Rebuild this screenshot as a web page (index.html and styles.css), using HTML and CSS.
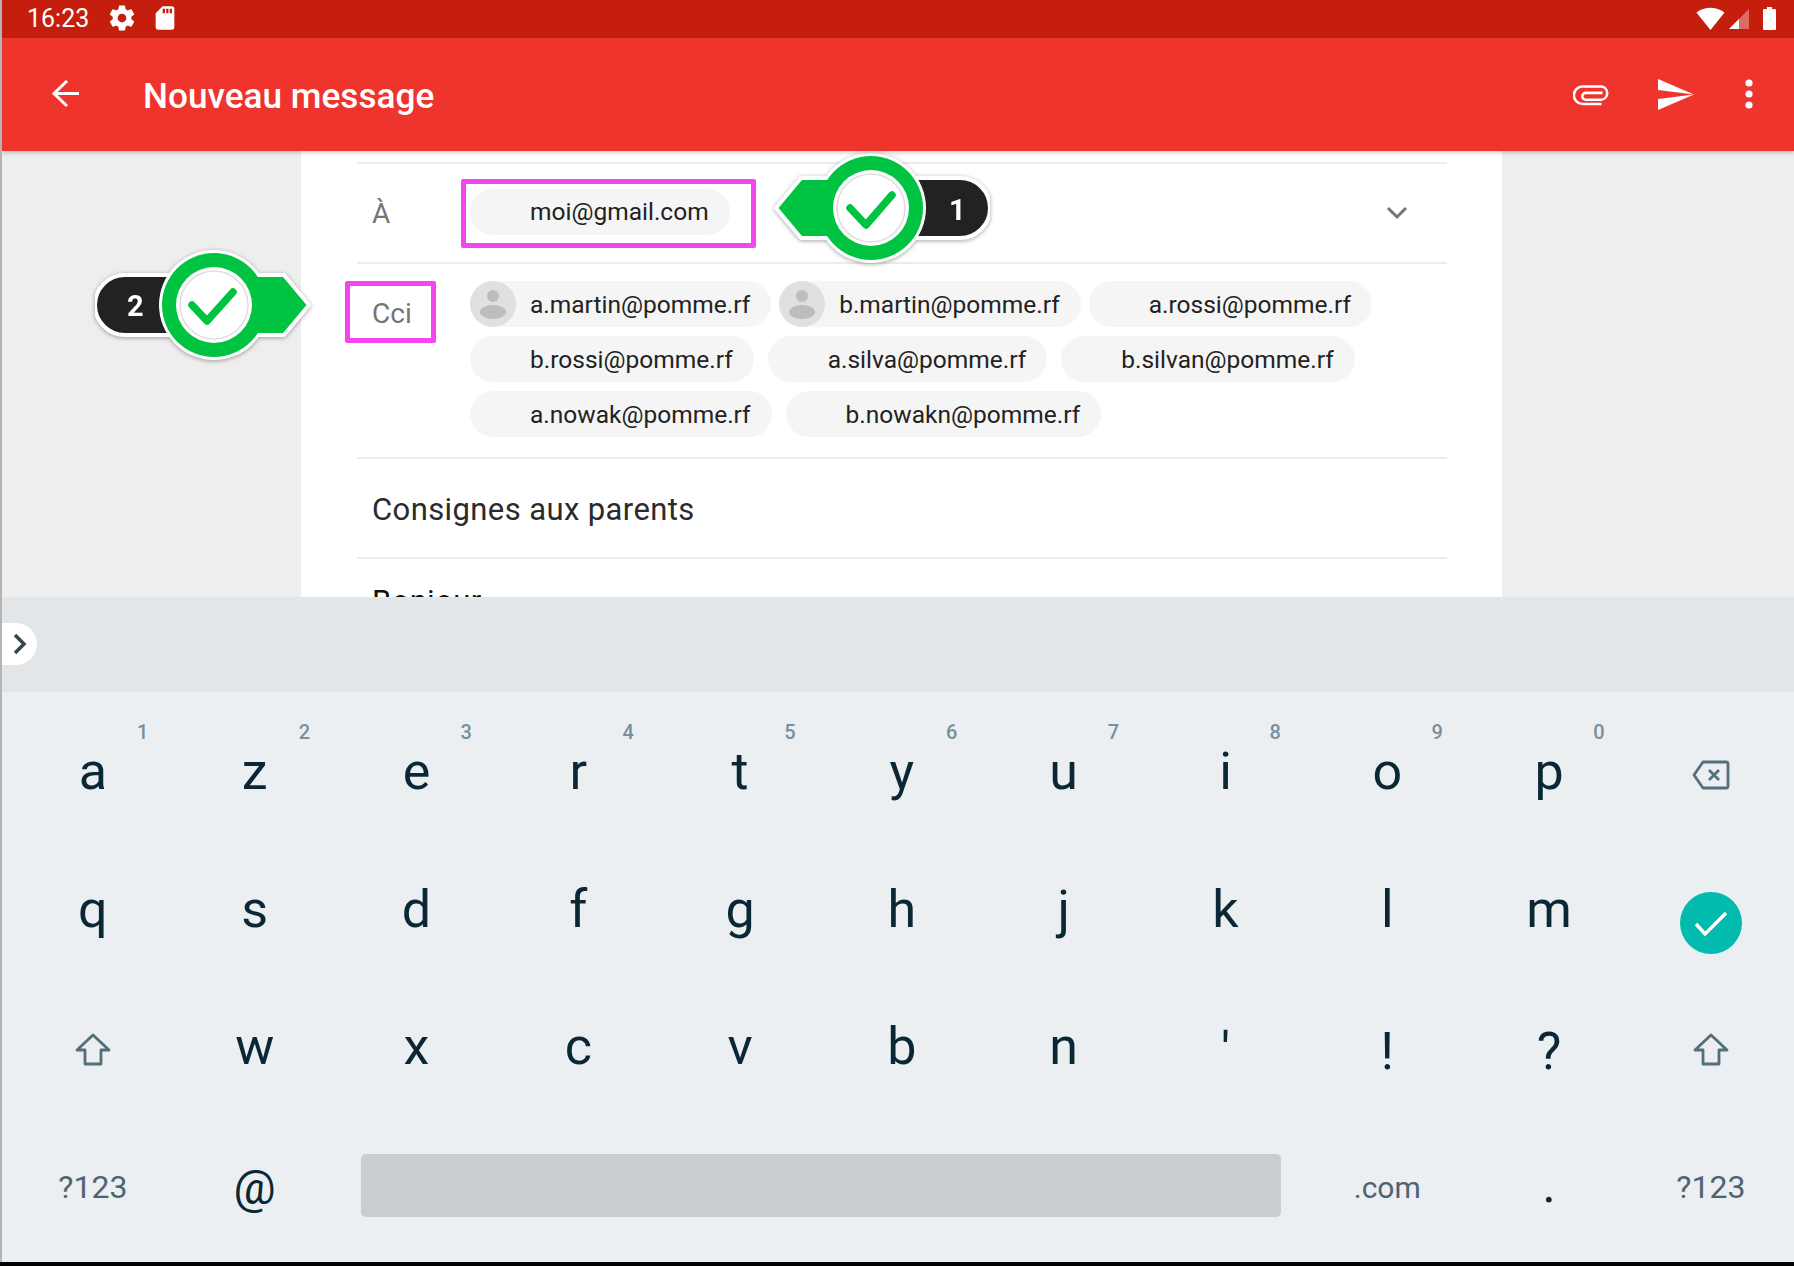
FILE: index.html
```html
<!DOCTYPE html>
<html lang="fr">
<head>
  <meta charset="UTF-8">
  <title>Nouveau message</title>
  <link rel="stylesheet" href="styles.css">
</head>
<body>
  <div class="screen">

    <div class="statusbar">
      <span class="clock">16:23</span>
      <svg class="st-gear" viewBox="0 0 24 24"><path fill="#fff" d="M19.43 12.98c.04-.32.07-.64.07-.98s-.03-.66-.07-.98l2.11-1.65c.19-.15.24-.42.12-.64l-2-3.46c-.12-.22-.39-.3-.61-.22l-2.49 1c-.52-.4-1.08-.73-1.69-.98l-.38-2.65C14.46 2.18 14.25 2 14 2h-4c-.25 0-.46.18-.49.42l-.38 2.65c-.61.25-1.17.59-1.69.98l-2.49-1c-.23-.09-.49 0-.61.22l-2 3.46c-.13.22-.07.49.12.64l2.11 1.65c-.04.32-.07.65-.07.98s.03.66.07.98l-2.11 1.65c-.19.15-.24.42-.12.64l2 3.46c.12.22.39.3.61.22l2.49-1c.52.4 1.08.73 1.69.98l.38 2.65c.03.24.24.42.49.42h4c.25 0 .46-.18.49-.42l.38-2.65c.61-.25 1.17-.59 1.69-.98l2.49 1c.23.09.49 0 .61-.22l2-3.46c.12-.22.07-.49-.12-.64l-2.11-1.65zM12 15.5c-1.93 0-3.5-1.57-3.5-3.5s1.57-3.5 3.5-3.5 3.5 1.57 3.5 3.5-1.57 3.5-3.5 3.5z"/></svg>
      <svg class="st-sd" viewBox="0 0 24 24"><path fill="#fff" d="M18 2h-8L4 8v12c0 1.1.9 2 2 2h12c1.1 0 2-.9 2-2V4c0-1.1-.9-2-2-2zm-6 6h-2V4h2v4zm3 0h-2V4h2v4zm3 0h-2V4h2v4z"/></svg>
      <div class="spacer"></div>
      <svg class="st-wifi" viewBox="0 0 24 24"><path fill="#fff" d="M12.01 21.49L23.64 7c-.45-.34-4.93-4-11.64-4C5.28 3 .81 6.66.36 7l11.63 14.5.01.01.01-.01z"/></svg>
      <svg class="st-signal" viewBox="0 0 20 20"><path fill="#fff" fill-opacity=".35" d="M20 0V20H0z"/><path fill="#fff" d="M10 10V20H0z"/></svg>
      <svg class="st-battery" viewBox="0 0 13 23"><path fill="#fff" d="M4 0h5v2h3a1 1 0 0 1 1 1v19a1 1 0 0 1-1 1H1a1 1 0 0 1-1-1V3a1 1 0 0 1 1-1h3z"/></svg>
    </div>

    <div class="toolbar">
      <svg class="tb-back" viewBox="0 0 30 28"><path fill="none" stroke="#fff" stroke-width="3" d="M2 13.5H28M16 1L3 13.5 16 26"/></svg>
      <h1 class="tb-title">Nouveau message</h1>
      <svg class="tb-clip" viewBox="0 0 36 20"><path fill="none" stroke="#fff" stroke-width="2.4" d="M27 18H9A8 8 0 0 1 9 1.5H27A6.3 6.3 0 0 1 27 14H12A3.2 3.2 0 0 1 12 7.5H28"/></svg>
      <svg class="tb-send" viewBox="0 0 36 31"><path fill="#fff" d="M0 0L36 15.5 0 11zM0 20L36 15.5 0 31z"/></svg>
      <svg class="tb-more" viewBox="0 0 8 30"><circle cx="4" cy="4" r="3.6" fill="#fff"/><circle cx="4" cy="15" r="3.6" fill="#fff"/><circle cx="4" cy="26" r="3.6" fill="#fff"/></svg>
    </div>

    <div class="content">
      <div class="card">
        <div class="row to-row">
          <span class="label">À</span>
          <div class="chip chip-to">moi@gmail.com</div>
          <svg class="expand" viewBox="0 0 22 14"><path fill="none" stroke="#757575" stroke-width="3" d="M2 2L11 11 20 2"/></svg>
        </div>
        <div class="row cci-row">
          <span class="label label-cci">Cci</span>
          <div class="chips">
            <div class="chip-line line-first">
              <div class="chip">
                <svg class="avatar" viewBox="0 0 46 46"><circle cx="23" cy="23" r="23" fill="#e0e0e0"/><circle cx="23" cy="15" r="6" fill="#bdbdbd"/><ellipse cx="23" cy="31" rx="13" ry="7" fill="#bdbdbd"/></svg>
                a.martin@pomme.rf
              </div>
              <div class="chip">
                <svg class="avatar" viewBox="0 0 46 46"><circle cx="23" cy="23" r="23" fill="#e0e0e0"/><circle cx="23" cy="15" r="6" fill="#bdbdbd"/><ellipse cx="23" cy="31" rx="13" ry="7" fill="#bdbdbd"/></svg>
                b.martin@pomme.rf
              </div>
              <div class="chip">a.rossi@pomme.rf</div>
            </div>
            <div class="chip-line">
              <div class="chip">b.rossi@pomme.rf</div>
              <div class="chip">a.silva@pomme.rf</div>
              <div class="chip">b.silvan@pomme.rf</div>
            </div>
            <div class="chip-line">
              <div class="chip">a.nowak@pomme.rf</div>
              <div class="chip">b.nowakn@pomme.rf</div>
            </div>
          </div>
        </div>
        <div class="row subject">Consignes aux parents</div>
        <div class="body-text">Bonjour</div>
      </div>

      <div class="highlight hl-to"></div>
      <div class="highlight hl-cci"></div>

      <div class="badge badge-one">
        <svg viewBox="0 0 240 120" width="240" height="120">
          <g transform="translate(240 0) scale(-1 1)">
            <path d="M30 30H120V90H30A30 30 0 0 1 30 30Z" fill="#222" stroke="#fff" stroke-width="4" stroke-linejoin="round"/>
            <circle cx="119" cy="60" r="55" fill="#fff"/>
            <path d="M120 30H189L214 60 189 90H120Z" fill="#00c441" stroke="#fff" stroke-width="4" stroke-linejoin="round"/>
            <circle cx="119" cy="60" r="52" fill="#00c441"/>
            <circle cx="119" cy="60" r="38" fill="#fff"/>
            <circle cx="119" cy="60" r="34" fill="none" stroke="#ddd" stroke-width="1.5"/>
          </g>
          <path d="M100 60L116 77 142 47" fill="none" stroke="#00c441" stroke-width="7.5" stroke-linecap="round" stroke-linejoin="round"/>
        </svg>
        <span class="badge-num">1</span>
      </div>

      <div class="badge badge-two">
        <svg viewBox="0 0 240 120" width="240" height="120">
          <path d="M30 30H120V90H30A30 30 0 0 1 30 30Z" fill="#222" stroke="#fff" stroke-width="4" stroke-linejoin="round"/>
          <circle cx="119" cy="60" r="55" fill="#fff"/>
          <path d="M120 30H189L214 60 189 90H120Z" fill="#00c441" stroke="#fff" stroke-width="4" stroke-linejoin="round"/>
          <circle cx="119" cy="60" r="52" fill="#00c441"/>
          <circle cx="119" cy="60" r="38" fill="#fff"/>
          <circle cx="119" cy="60" r="34" fill="none" stroke="#ddd" stroke-width="1.5"/>
          <path d="M97 60L112 76 138 47" fill="none" stroke="#00c441" stroke-width="7.5" stroke-linecap="round" stroke-linejoin="round"/>
        </svg>
        <span class="badge-num">2</span>
      </div>
    </div>

    <div class="candidates">
      <div class="collapse">
        <svg viewBox="0 0 14 22" width="14" height="22"><path fill="none" stroke="#37474f" stroke-width="3.5" d="M2 2L11 11 2 20"/></svg>
      </div>
    </div>

    <div class="keyboard">
      <div class="key">a<span class="hint">1</span></div>
      <div class="key">z<span class="hint">2</span></div>
      <div class="key">e<span class="hint">3</span></div>
      <div class="key">r<span class="hint">4</span></div>
      <div class="key">t<span class="hint">5</span></div>
      <div class="key">y<span class="hint">6</span></div>
      <div class="key">u<span class="hint">7</span></div>
      <div class="key">i<span class="hint">8</span></div>
      <div class="key">o<span class="hint">9</span></div>
      <div class="key">p<span class="hint">0</span></div>
      <div class="key key-icon">
        <svg viewBox="0 0 38 30" width="38" height="30"><path fill="none" stroke="#546e7a" stroke-width="2.8" stroke-linejoin="round" d="M11 2H34a2 2 0 0 1 2 2V26a2 2 0 0 1-2 2H11L2 15z"/><path fill="none" stroke="#546e7a" stroke-width="2.8" d="M17 10L27 20M27 10L17 20"/></svg>
      </div>

      <div class="key">q</div>
      <div class="key">s</div>
      <div class="key">d</div>
      <div class="key">f</div>
      <div class="key">g</div>
      <div class="key">h</div>
      <div class="key">j</div>
      <div class="key">k</div>
      <div class="key">l</div>
      <div class="key">m</div>
      <div class="key key-icon">
        <div class="enter">
          <svg viewBox="0 0 36 28" width="36" height="28"><path fill="none" stroke="#fff" stroke-width="3.4" d="M3 15L12 25 33 4"/></svg>
        </div>
      </div>

      <div class="key key-icon">
        <svg viewBox="0 0 36 34" width="36" height="34"><path fill="none" stroke="#546e7a" stroke-width="2.8" stroke-linejoin="round" d="M18 2L34 17H26V31H10V17H2z"/></svg>
      </div>
      <div class="key">w</div>
      <div class="key">x</div>
      <div class="key">c</div>
      <div class="key">v</div>
      <div class="key">b</div>
      <div class="key">n</div>
      <div class="key key-sym">'</div>
      <div class="key key-sym">!</div>
      <div class="key key-sym">?</div>
      <div class="key key-icon">
        <svg viewBox="0 0 36 34" width="36" height="34"><path fill="none" stroke="#546e7a" stroke-width="2.8" stroke-linejoin="round" d="M18 2L34 17H26V31H10V17H2z"/></svg>
      </div>

      <div class="key key-fn">?123</div>
      <div class="key key-at">@</div>
      <div class="key key-icon key-space"><div class="spacebar"></div></div>
      <div class="key key-fn key-com">.com</div>
      <div class="key">.</div>
      <div class="key key-fn">?123</div>
    </div>

  </div>
</body>
</html>
```

FILE: styles.css
```css
body {
  margin: 0;
  background: #000;
  font-family: Roboto, "Liberation Sans", sans-serif;
}

.screen {
  display: flex;
  flex-direction: column;
  height: 1262px;
  overflow: hidden;
  border-left: 2px solid #b4b4b4;
  background: #eeeeee;
}

.spacer {
  flex: 1;
}

/* status bar */
.statusbar {
  display: flex;
  align-items: center;
  height: 36px;
  padding: 0 0 2px 25px;
  background: #c61e0d;
  color: #fff;
}

.clock {
  width: 61px;
  font-size: 25px;
}

.st-gear {
  width: 30px;
  height: 30px;
  margin-left: 19px;
}

.st-sd {
  width: 28px;
  height: 28px;
  margin-left: 14px;
}

.st-wifi {
  width: 29px;
  height: 29px;
  margin-top: 1px;
}

.st-signal {
  width: 20px;
  height: 20px;
  margin: 2px 0 0 4px;
}

.st-battery {
  width: 13px;
  height: 23px;
  margin: 0 18px 0 14px;
}

/* toolbar */
.toolbar {
  position: relative;
  z-index: 2;
  display: flex;
  align-items: center;
  height: 113px;
  padding-left: 49px;
  background: #ef332d;
  box-shadow: 0 2px 4px rgba(0, 0, 0, 0.2);
}

.tb-back {
  width: 30px;
  height: 28px;
  margin-top: -1px;
}

.tb-title {
  flex: 1;
  margin: 2px 0 0 62px;
  font-size: 35.2px;
  font-weight: 500;
  color: #fff;
}

.tb-clip {
  width: 38px;
  height: 21px;
  margin-top: 1px;
}

.tb-send {
  width: 36px;
  height: 31px;
  margin: -1px 0 0 47px;
}

.tb-more {
  width: 8px;
  height: 30px;
  margin: -1px 41px 0 51px;
}

/* compose card */
.content {
  position: relative;
  height: 446px;
  overflow: hidden;
}

.card {
  width: 1090px;
  height: 446px;
  margin-left: 299px;
  padding: 11px 55px 0 56px;
  background: #fff;
}

.row {
  border-top: 2px solid #ececec;
  display: flex;
}

.to-row {
  align-items: center;
  height: 98px;
}

.cci-row {
  height: 193px;
}

.label {
  width: 98px;
  padding-left: 15px;
  font-size: 28px;
  color: #757575;
}

.label-cci {
  padding-top: 33px;
}

.chip {
  display: flex;
  align-items: center;
  position: relative;
  height: 46px;
  padding: 0 21px 0 60px;
  border-radius: 23px;
  background: #f5f5f5;
  font-size: 24.5px;
  color: #222;
  white-space: nowrap;
}

.chip-to {
  margin-top: -3px;
}

.avatar {
  position: absolute;
  left: 0;
  top: 0;
  width: 46px;
  height: 46px;
}

.chips {
  display: flex;
  flex-direction: column;
  gap: 9px;
  padding-top: 17px;
}

.chip-line {
  display: flex;
  gap: 14px;
}

.line-first {
  gap: 8px;
}

.expand {
  width: 22px;
  height: 14px;
  margin-left: auto;
  margin-right: 39px;
}

.subject {
  align-items: center;
  height: 96px;
  padding: 2px 0 0 15px;
  font-size: 31px;
  letter-spacing: 0.4px;
  color: #2b2b2b;
}

.body-text {
  border-top: 2px solid #ececec;
  padding: 24px 0 0 15px;
  font-size: 31px;
  letter-spacing: 0.4px;
  color: #111;
}

/* overlays: annotation frames and numbered badges */
.highlight {
  position: absolute;
  border: 5px solid #f545ef;
  border-radius: 2px;
}

.hl-to {
  left: 459px;
  top: 28px;
  width: 285px;
  height: 59px;
}

.hl-cci {
  left: 343px;
  top: 130px;
  width: 81px;
  height: 52px;
}

.badge {
  position: absolute;
  width: 240px;
  height: 120px;
  filter: drop-shadow(0 1px 2px rgba(0, 0, 0, 0.35));
}

.badge-one {
  left: 748px;
  top: -3px;
}

.badge-two {
  left: 93px;
  top: 94px;
}

.badge-num {
  position: absolute;
  top: 41px;
  font-size: 29px;
  font-weight: 700;
  line-height: 40px;
  color: #fff;
}

.badge-one .badge-num {
  left: 199px;
  top: 42px;
}

.badge-two .badge-num {
  left: 32px;
}

/* keyboard */
.candidates {
  height: 95px;
  background: #e2e6e9;
  display: flex;
  align-items: center;
}

.collapse {
  display: flex;
  align-items: center;
  width: 35px;
  height: 42px;
  margin-top: -1px;
  padding-left: 11px;
  box-sizing: border-box;
  border-radius: 0 21px 21px 0;
  background: #fff;
}

.keyboard {
  display: grid;
  grid-template-columns: repeat(11, 161.8px);
  grid-auto-rows: 137.5px;
  height: 570px;
  box-sizing: border-box;
  padding: 14px 0 0 10px;
  background: #ebeff2;
}

.key {
  position: relative;
  display: flex;
  align-items: center;
  justify-content: center;
  padding-bottom: 6px;
  font-size: 52px;
  color: #0b2635;
}

.key-icon {
  padding-bottom: 0;
}

.key-sym {
  padding: 4px 0 0;
}

.key-at {
  padding-bottom: 0;
  font-size: 47px;
}

.key-fn {
  padding-bottom: 0;
  font-size: 32px;
  color: #4f6472;
}

.key-com {
  font-size: 30px;
}

.key-space {
  grid-column: span 6;
}

.spacebar {
  width: 920px;
  height: 63px;
  margin-top: -3px;
  border-radius: 5px;
  background: #c8cdd1;
}

.hint {
  position: absolute;
  left: 125px;
  top: 14px;
  font-size: 20px;
  font-weight: 500;
  color: #78909c;
}

.enter {
  display: flex;
  align-items: center;
  justify-content: center;
  width: 62px;
  height: 62px;
  margin-top: 22px;
  border-radius: 50%;
  background: #00bbae;
}
```
